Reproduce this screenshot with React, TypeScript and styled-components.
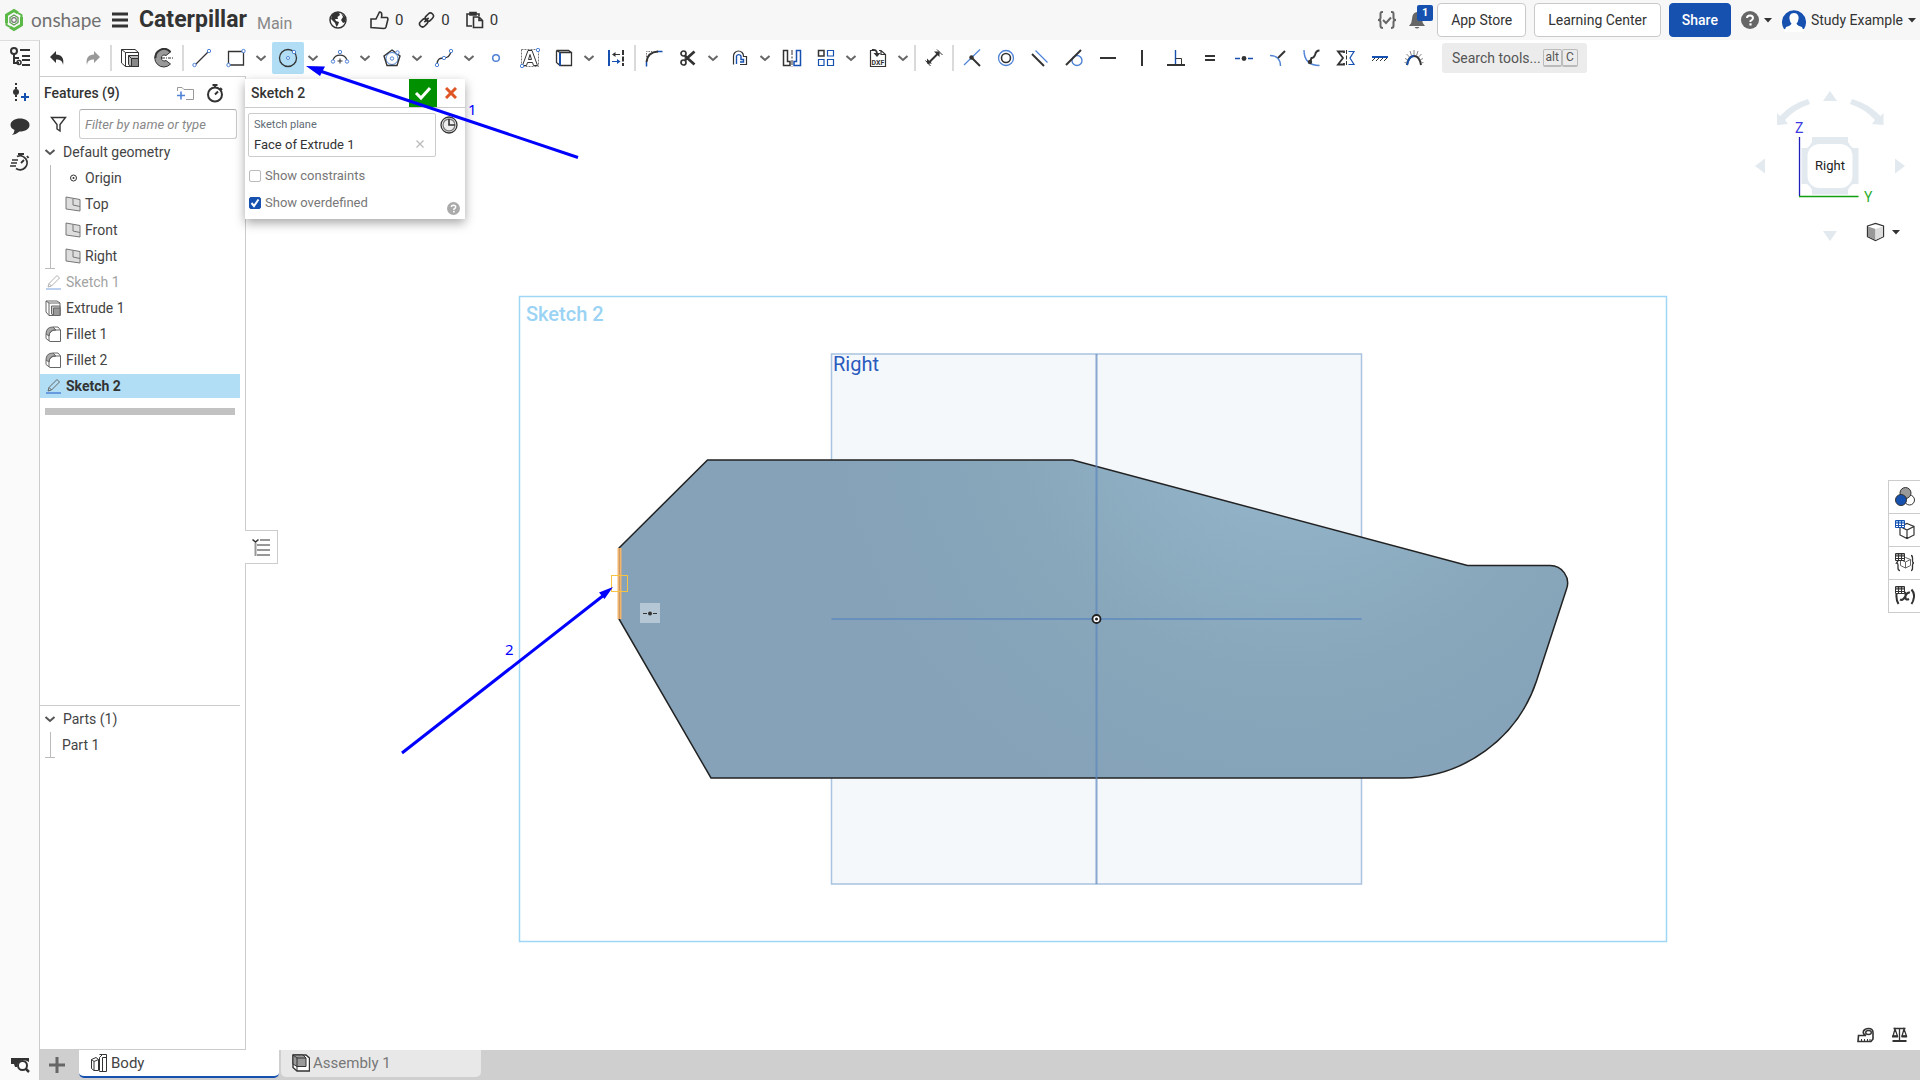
import React from "react";
import styled, { createGlobalStyle, css } from "styled-components";

const INK = "#333333";
const BLUE = "#1651b0";
const SOFT = "#4f83d6";

const GlobalStyle = createGlobalStyle`
  * { box-sizing: border-box; }
  body { margin: 0; background: #fff; overflow: hidden; }
  body, button, input { font-family: Roboto, "Liberation Sans", sans-serif; font-size: 14px; color: #333; }
  button { border: 0; background: none; padding: 0; margin: 0; cursor: pointer; }
  svg { display: block; flex: none; }
`;

const Page = styled.div`
  position: relative;
  display: grid;
  grid-template-rows: 40px minmax(0, 1fr);
  height: 100vh;
`;

/* ---------- top bar ---------- */
const TopBar = styled.header`
  display: flex;
  align-items: center;
  background: #f7f7f7;
  padding: 0 4px;
`;
const Brand = styled.a`
  display: flex;
  align-items: center;
  gap: 7px;
  width: 108px;
  color: #707070;
  font-family: Lato, sans-serif;
  font-size: 19px;
  line-height: 36px;
  text-decoration: none;
`;
const DocTitle = styled.h1`
  margin: 0 0 0 11px;
  font-size: 23px;
  font-weight: 700;
  line-height: 40px;
`;
const Branch = styled.span`
  margin: 6px 0 0 10px;
  width: 72px;
  color: #888;
  font-size: 16px;
`;
const Stat = styled.button<{ $wide?: boolean }>`
  display: flex;
  align-items: center;
  gap: 6px;
  margin-right: ${(p) => (p.$wide ? 23 : 15)}px;
  font-size: 15px;
`;
const Spacer = styled.div`
  flex: 1;
`;
const TopIcon = styled.button`
  position: relative;
  margin-right: 12px;
`;
const Badge = styled.span`
  position: absolute;
  left: 8px;
  top: -5px;
  width: 16px;
  height: 16px;
  border-radius: 2px;
  background: ${BLUE};
  color: #fff;
  font-size: 11px;
  font-weight: 700;
  line-height: 16px;
`;
const TopButton = styled.button<{ $primary?: boolean }>`
  height: 34px;
  padding: 0 13px;
  margin-right: 8px;
  border: 1px solid #c9c9c9;
  border-radius: 4px;
  background: #fff;
  ${(p) =>
    p.$primary &&
    css`
      padding: 0 12px;
      background: ${BLUE};
      border-color: ${BLUE};
      color: #fff;
      font-weight: 500;
    `}
`;
const MenuButton = styled.button`
  display: flex;
  align-items: center;
  gap: 5px;
  margin-left: 2px;
  margin-right: 8px;
  &:last-child {
    margin: 0 0 0 2px;
  }
`;

/* ---------- body ---------- */
const Body = styled.div`
  display: grid;
  grid-template-columns: 40px minmax(0, 1fr);
  min-height: 0;
`;
const Rail = styled.nav`
  display: flex;
  flex-direction: column;
  align-items: center;
  gap: 15px;
  padding: 6px 0 5px;
  background: #fafafa;
  border-right: 1px solid #ccc;
  border-top: 1px solid #ddd;
`;
const Column = styled.div`
  display: flex;
  flex-direction: column;
  min-height: 0;
`;
const Toolbar = styled.div`
  display: flex;
  align-items: center;
  gap: 2px;
  height: 36px;
  padding-left: 2px;
`;
const ToolGroup = styled.div`
  display: flex;
`;
const Tool = styled.button<{ $active?: boolean }>`
  display: flex;
  align-items: center;
  justify-content: center;
  width: 32px;
  height: 32px;
  border-radius: 2px;
  background: ${(p) => (p.$active ? "#b1def5" : "transparent")};
`;
const ToolMenu = styled.button`
  display: flex;
  align-items: center;
  justify-content: center;
  width: 18px;
`;
const Divider = styled.span`
  width: 2px;
  height: 26px;
  background: #dadada;
`;
const SearchTools = styled.button`
  display: flex;
  align-items: center;
  margin-left: 10px;
  height: 30px;
  padding: 0 9px 0 10px;
  border-radius: 3px;
  background: #ececec;
  color: #555;
`;
const Key = styled.kbd`
  height: 18px;
  padding: 0 2px;
  border: 1px solid #bbb;
  border-bottom-width: 2px;
  border-radius: 2px;
  font: 12px/15px Roboto, sans-serif;
  &:first-of-type {
    margin-left: 2px;
  }
  &:last-of-type {
    padding: 0 3px;
  }
`;

const Workspace = styled.div`
  display: flex;
  flex: 1;
  min-height: 0;
`;
const Panel = styled.aside`
  display: flex;
  flex-direction: column;
  width: 206px;
  border: 1px solid #ccc;
  border-left: 0;
`;
const PanelHead = styled.div`
  display: flex;
  align-items: center;
  height: 32px;
  padding: 0 21px 0 4px;
`;
const PanelTitle = styled.h2`
  flex: 1;
  margin: 0;
  font-size: 14px;
  font-weight: 500;
`;
const HeadButton = styled.button`
  margin-left: 12px;
`;
const FilterRow = styled.div`
  display: flex;
  align-items: center;
  gap: 12px;
  padding: 0 8px 0 10px;
`;
const FilterInput = styled.input`
  flex: 1;
  min-width: 0;
  height: 30px;
  padding: 0 5px;
  border: 1px solid #ccc;
  border-top-color: #aaa;
  border-radius: 3px;
  outline: 0;
  font-size: 13px;
  font-style: italic;
  &::placeholder {
    color: #888;
  }
`;
const Tree = styled.ul`
  display: flex;
  flex-direction: column;
  list-style: none;
  margin: 0;
  padding: 0;
`;
const Branches = styled(Tree)`
  position: relative;
  &::before {
    content: "";
    position: absolute;
    left: 10px;
    top: 0;
    bottom: 0;
    border-left: 1px solid #bbb;
  }
  &::after {
    content: "";
    position: absolute;
    left: 5px;
    bottom: 0;
    width: 10px;
    border-bottom: 1px solid #bbb;
  }
`;
const Row = styled.li<{ $indent: number; $gap?: number; $muted?: boolean; $active?: boolean }>`
  display: flex;
  align-items: center;
  gap: ${(p) => p.$gap ?? 5}px;
  height: 24px;
  margin: 1px 5px 1px 0;
  padding-left: ${(p) => p.$indent}px;
  color: ${(p) => (p.$muted ? "#a3a3a3" : "#444")};
  ${(p) =>
    p.$muted &&
    css`
      svg {
        opacity: 0.5;
      }
    `}
  ${(p) =>
    p.$active &&
    css`
      background: #b1def5;
      color: #333;
      font-weight: 700;
    `}
`;
const RollbackBar = styled.div`
  height: 7px;
  margin: 9px 10px 0 5px;
  background: #c2c2c2;
`;
const Parts = styled.section`
  height: 344px;
  margin-right: 5px;
  border-top: 1px solid #ccc;
`;

/* ---------- canvas ---------- */
const Canvas = styled.main`
  position: relative;
  flex: 1;
  min-width: 0;
`;
const Scene = styled.svg`
  width: 100%;
  height: 100%;
`;
const PanelToggle = styled.button`
  position: absolute;
  left: -1px;
  top: 454px;
  display: flex;
  align-items: center;
  justify-content: center;
  width: 33px;
  height: 34px;
  border: 1px solid #ccc;
  border-left: 0;
  background: #fff;
`;
const Dialog = styled.form`
  position: absolute;
  left: -1px;
  top: 3px;
  width: 220px;
  height: 140px;
  background: #fff;
  box-shadow: 0 4px 10px rgba(0, 0, 0, 0.35);
`;
const DialogHead = styled.div`
  display: flex;
  height: 29px;
  border-bottom: 1px solid #ccc;
`;
const DialogTitle = styled.h2`
  flex: 1;
  margin: 0;
  padding-left: 6px;
  font-size: 14px;
  font-weight: 500;
  line-height: 28px;
`;
const DialogButton = styled.button<{ $accept?: boolean }>`
  display: flex;
  align-items: center;
  justify-content: center;
  width: 28px;
  height: 28px;
  background: ${(p) => (p.$accept ? "#009000" : "transparent")};
`;
const DialogRow = styled.div`
  display: flex;
  align-items: flex-start;
  gap: 4px;
  padding: 5px 3px;
`;
const PlaneField = styled.div`
  display: flex;
  justify-content: space-between;
  width: 188px;
  height: 44px;
  padding: 4px 11px 0 5px;
  border: 1px solid #ccc;
  border-radius: 2px;
`;
const PlaneLabel = styled.label`
  display: block;
  color: #5f6b75;
  font-size: 11px;
  line-height: 14px;
`;
const PlaneValue = styled.input`
  width: 140px;
  height: 24px;
  padding: 0;
  border: 0;
  outline: 0;
  font-size: 13px;
`;
const ClearButton = styled.button`
  align-self: end;
  margin-bottom: 8px;
`;
const Check = styled.label`
  display: flex;
  align-items: center;
  gap: 4px;
  height: 27px;
  padding-left: 4px;
  color: #777;
  font-size: 13px;
`;
const Box = styled.input`
  appearance: none;
  width: 12px;
  height: 12px;
  margin: 0;
  border: 1px solid #bbb;
  border-radius: 2px;
  &:checked {
    border-color: ${BLUE};
    background: ${BLUE};
  }
`;
const BoxWrap = styled.span`
  position: relative;
  display: flex;
  svg {
    position: absolute;
    inset: 0;
    pointer-events: none;
  }
`;
const HelpDot = styled.button`
  position: absolute;
  right: 5px;
  bottom: 4px;
`;
const ViewMode = styled.button`
  position: absolute;
  right: 20px;
  top: 146px;
  display: flex;
  align-items: center;
  gap: 7px;
`;
const SideTabs = styled.nav`
  position: absolute;
  right: 0;
  top: 404px;
  width: 32px;
  border: 1px solid #ccc;
  border-right: 0;
  background: #fff;
`;
const SideTab = styled.button`
  display: flex;
  align-items: center;
  justify-content: center;
  width: 31px;
  height: 32px;
  & + & {
    height: 33px;
    border-top: 1px solid #ccc;
  }
`;
const Measures = styled.div`
  position: absolute;
  right: 11px;
  bottom: 5px;
  display: flex;
  gap: 16px;
`;

/* ---------- bottom tabs ---------- */
const TabBar = styled.nav`
  display: flex;
  height: 30px;
  background: #cfcfcf;
`;
const AddTab = styled.button`
  display: flex;
  align-items: center;
  justify-content: center;
  width: 34px;
  margin-right: 5px;
`;
const Tab = styled.button<{ $active?: boolean }>`
  display: flex;
  align-items: center;
  gap: 3px;
  width: 200px;
  height: ${(p) => (p.$active ? 28 : 27)}px;
  margin-right: 2px;
  padding-left: 11px;
  border-radius: 0 0 5px 5px;
  border-bottom: 2px solid ${(p) => (p.$active ? BLUE : "#e8e8e8")};
  background: ${(p) => (p.$active ? "#fff" : "#e8e8e8")};
  color: ${(p) => (p.$active ? "#444" : "#777")};
  font-size: 15px;
`;

const Overlay = styled.svg`
  position: absolute;
  inset: 0;
  width: 100%;
  height: 100%;
  pointer-events: none;
`;

/* ---------- icons ---------- */
type IconProps = { children: React.ReactNode; size?: number; w?: number; h?: number; color?: string; sw?: number };
const Icon = ({ children, size = 20, w = size, h = size, color = INK, sw = 1 }: IconProps) => (
  <svg width={w} height={h} viewBox={`0 0 ${w} ${h}`} fill="none" stroke={color} strokeWidth={sw}>
    {children}
  </svg>
);
const Chevron = ({ color = "#666" }) => (
  <Icon w={12} h={8} color={color} sw={2}>
    <path d="M1.5 2 L6 6 L10.5 2" />
  </Icon>
);
const Caret = () => (
  <Icon w={8} h={5}>
    <path d="M0 0 H8 L4 4.5Z" fill={INK} stroke="none" />
  </Icon>
);
const Dot = ({ x, y, r = 1.7 }: { x: number; y: number; r?: number }) => (
  <circle cx={x} cy={y} r={r} fill="#fff" stroke={SOFT} />
);

const undo = <path d="M2 9 L8 3 V6.5 C13.5 6.5 16.5 10.5 15 17 C14.5 13 12.5 11.5 8 11.5 V15Z" fill={INK} stroke="none" />;

const art: Record<string, React.ReactNode> = {
  undo,
  redo: (
    <g opacity={0.5} transform="matrix(-1 0 0 1 20 0)">
      {undo}
    </g>
  ),
  extrude: (
    <>
      <path d="M1.5 15 V1.5 H15 L18.5 4.5 V18.5 H5.5 Z M1.5 1.5 L5.5 4.5 H18.5 M5.5 4.5 V18.5" />
      <path d="M8.5 7.5 H18.5 V18.5 H11 L8.5 16.5Z" fill="#bbb" />
      <path d="M11.5 10.5 H18.5 V18.5 H11.5Z M8.5 7.5 L11.5 10.5" fill="#888" />
    </>
  ),
  imprint: (
    <>
      <path d="M16.5 4 A9 9 0 1 0 16.5 16 L12 12.5 A3 3 0 1 1 12 7.5Z" fill="#999" />
      <path d="M16.5 4 A8.5 8.5 0 0 0 1.5 10" strokeWidth={2} />
      <path d="M8 10 H19" stroke="#fff" strokeWidth={3} />
      <path d="M8 10 H19" strokeDasharray="3 1 1 1" />
    </>
  ),
  line: (
    <>
      <path d="M3.5 16.5 L16.5 3.5" strokeWidth={1.3} />
      <Dot x={2.5} y={17} />
      <Dot x={17} y={3} />
    </>
  ),
  rect: (
    <>
      <path d="M2.5 3.5 H17.5 V17 H2.5Z" strokeWidth={1.3} />
      <Dot x={2.5} y={17} />
      <Dot x={17.5} y={3} />
    </>
  ),
  circle: (
    <>
      <circle cx={10} cy={10} r={8.5} strokeWidth={1.3} />
      <Dot x={10} y={10} r={1.5} />
      <Dot x={16} y={4} />
    </>
  ),
  arc: (
    <>
      <path d="M3 12 A7.5 7.5 0 0 1 17 12" strokeWidth={1.3} />
      <path d="M10 10.5 V15.5 M7.5 13 H12.5" />
      <Dot x={3} y={13.5} />
      <Dot x={17} y={13.5} />
      <Dot x={10} y={4} />
    </>
  ),
  polygon: (
    <>
      <circle cx={10} cy={10.5} r={6} stroke={SOFT} />
      <path d="M10 2 L18 8 L15 17.5 H5 L2 8Z" strokeWidth={1.4} />
      <Dot x={10} y={10.5} />
      <Dot x={15.5} y={4.5} />
    </>
  ),
  spline: (
    <>
      <path d="M3 16 C4 8 8 11 10 10 C14 9 15 9 17 4" strokeWidth={1.3} />
      <Dot x={3} y={17} />
      <Dot x={10} y={10} />
      <Dot x={17} y={3} />
    </>
  ),
  point: <circle cx={10} cy={10} r={3.3} stroke={SOFT} strokeWidth={1.5} />,
  text: (
    <>
      <path d="M1.5 1.5 H18.5 V18.5 H1.5Z" strokeDasharray="2 1" stroke="#777" />
      <path d="M2.5 17.5 L8 2.5 H12 L17.5 17.5 H13.5 L12.5 14.5 H7.5 L6.5 17.5Z M8.5 11.5 H11.5 L10 6.5Z" fill="#fff" />
      <Dot x={2} y={18} />
      <Dot x={18} y={2} />
    </>
  ),
  project: (
    <>
      <path d="M6 4.5 H17.5 V17.5 H6Z M2.5 2.5 L6 4.5 M2.5 2.5 V14.5 L6 17.5 M2.5 2.5 H14.5 L17.5 4.5" strokeWidth={1.3} />
      <path d="M6 5 V17.5" stroke={BLUE} strokeWidth={2} />
    </>
  ),
  transfer: (
    <>
      <path d="M3 2 V18" stroke={BLUE} strokeWidth={2} />
      <path d="M17 2 V18" strokeWidth={2} strokeDasharray="5 1.5" />
      <path d="M14 6.5 H7" />
      <path d="M9.5 4 V9 L6 6.5Z" fill={INK} stroke="none" />
      <path d="M6 13.5 H13" stroke={BLUE} />
      <path d="M11 11 V16 L14.5 13.5Z" fill={BLUE} stroke="none" />
    </>
  ),
  fillet: (
    <>
      <path d="M2.5 18.5 V14 M13 3.5 H18.5" stroke={BLUE} strokeWidth={1.5} />
      <path d="M2.5 14 C3 8 7 4 14 3.5" strokeWidth={2} />
      <path d="M2.5 9 V3.5 H8" strokeDasharray="1.5 1" stroke="#777" />
    </>
  ),
  trim: (
    <>
      <circle cx={5.5} cy={5.5} r={2.5} strokeWidth={1.7} />
      <circle cx={5.5} cy={14.5} r={2.5} strokeWidth={1.7} />
      <path d="M7 8 L16.5 16.5 M7 12 L16.5 3.5" strokeWidth={2.8} />
    </>
  ),
  offset: (
    <>
      <path d="M3.5 16.5 V8 A5 5 0 0 1 13.5 8 V8.5 H16.5 V16.5 H10" strokeWidth={1.2} />
      <path d="M6.5 16 V8 A2.5 2.5 0 0 1 11 8 V11.5 H13.5 V14 H10" stroke={BLUE} strokeWidth={1.4} />
    </>
  ),
  mirror: (
    <>
      <path d="M1.5 2.5 H5.5 V13.5 H8 V17.5 H1.5Z" strokeWidth={1.5} />
      <path d="M18.5 2.5 H14.5 V13.5 H12 V17.5 H18.5Z" stroke={BLUE} strokeWidth={1.5} />
      <path d="M10 2 V19" strokeDasharray="5 1.5 2 1.5" />
    </>
  ),
  pattern: (
    <>
      <path d="M2.5 2.5 H8 V8 H2.5Z" strokeWidth={1.5} />
      <path d="M11.5 2.5 H17.5 V8 H11.5Z M2.5 11.5 H8 V17.5 H2.5Z M11.5 11.5 H17.5 V17.5 H11.5Z" stroke={BLUE} strokeWidth={1.2} />
    </>
  ),
  dxf: (
    <>
      <path d="M6 2.5 H2.5 V18.5 H17.5 V6.5 L13 2.5 H11 M13 2.5 V6.5 H17.5" strokeWidth={1.2} />
      <path d="M4 2 Q9 1 9 6" strokeWidth={1.8} />
      <path d="M5.5 5 H12.5 L9 9Z" fill={INK} stroke="none" />
      <text x={10} y={16.5} textAnchor="middle" fontSize={7} fontWeight={700} fill={INK} stroke="none">
        DXF
      </text>
    </>
  ),
  dimension: (
    <>
      <path d="M4 15.5 L15 4.5" strokeWidth={2} />
      <path d="M3 15.5 V10.5 L8 15.5Z M10 3.5 H15.5 V9Z" fill={INK} stroke="none" />
      <path d="M13 1.5 L18.5 7 M1.5 12.5 L6.5 18" />
    </>
  ),
  coincident: (
    <>
      <path d="M2 17 L18 1.5" stroke={SOFT} strokeWidth={1.2} />
      <path d="M9.5 9.5 L18 18" strokeWidth={2} />
      <circle cx={9.5} cy={9.5} r={2.2} fill={INK} stroke="none" />
    </>
  ),
  concentric: (
    <>
      <circle cx={10} cy={10} r={7.5} stroke={SOFT} strokeWidth={1.3} />
      <circle cx={10} cy={10} r={4.5} strokeWidth={1.6} />
    </>
  ),
  parallel: (
    <>
      <path d="M2 6 L14 18" strokeWidth={2} />
      <path d="M5.5 2.5 L17.5 14.5" stroke={SOFT} strokeWidth={1.2} />
    </>
  ),
  tangent: (
    <>
      <circle cx={13} cy={12.5} r={5} stroke={SOFT} strokeWidth={1.4} />
      <path d="M2 17 L17 2" strokeWidth={2} />
    </>
  ),
  horizontal: <path d="M2 10 H18" strokeWidth={2} />,
  vertical: <path d="M10 2 V18" strokeWidth={2} />,
  perpendicular: (
    <>
      <path d="M1 17 H19" strokeWidth={2} />
      <path d="M9.5 2 V16" stroke={BLUE} strokeWidth={1.4} />
      <path d="M9.5 10.5 H15.5 V16" />
    </>
  ),
  equal: <path d="M5 8 H15 M5 12 H15" strokeWidth={2} />,
  midpoint: (
    <>
      <path d="M1 10.5 H6 M14 10.5 H19" stroke={BLUE} strokeWidth={1.4} />
      <circle cx={10} cy={10.5} r={2.4} fill={INK} stroke="none" />
    </>
  ),
  normal: (
    <>
      <path d="M2 7.5 C8 7.5 12.5 11 12.5 18" stroke={SOFT} strokeWidth={1.4} />
      <path d="M10 10 L17 3" strokeWidth={2} />
    </>
  ),
  pierce: (
    <>
      <path d="M2 2 C2 12 7 17.5 17.5 17.5" stroke={SOFT} strokeWidth={1.4} />
      <path d="M8 14 L9.5 10 Q12 10 13 7 Q14 2.5 17.5 2.5" strokeWidth={2} />
      <circle cx={8} cy={14} r={2.2} fill={INK} stroke="none" />
    </>
  ),
  symmetric: (
    <>
      <path d="M8 5 V3.5 H2 L7 10 L2 16.5 H8 V15" strokeWidth={1.8} />
      <path d="M12.5 3.5 H18 L14 10 L18 16.5 H12.5" stroke={BLUE} strokeWidth={1.2} />
      <path d="M10.5 2 V18" strokeDasharray="4 1.5" />
    </>
  ),
  fix: (
    <>
      <path d="M2 9 H18" stroke={BLUE} strokeWidth={2} />
      <path d="M2 13 L5 10 M6 13 L9 10 M10 13 L13 10 M14 13 L17 10" />
    </>
  ),
  curvature: (
    <>
      <path d="M3 17 C5 5 15 5 17 17" strokeWidth={2} />
      <path d="M3 17 C4.5 10 7 8 10 8" stroke={BLUE} strokeWidth={2} />
      <path d="M10 7 V2 M7.5 7.5 L6 3 M12.5 7.5 L14 3 M5.5 9 L2.5 6 M14.5 9 L17.5 6 M4 12 L1 10.5 M16 12 L19 10.5 M3 15 L0.5 14.5 M17 15 L19.5 14.5" stroke="#888" />
    </>
  ),
};

type ToolDef = [name: string, label: string, menu?: boolean] | null;
const tools: ToolDef[] = [
  ["undo", "Undo"],
  ["redo", "Redo"],
  null,
  ["extrude", "Extrude"],
  ["imprint", "Revolve"],
  null,
  ["line", "Line"],
  ["rect", "Rectangle", true],
  ["circle", "Circle", true],
  ["arc", "Arc", true],
  ["polygon", "Polygon", true],
  ["spline", "Spline", true],
  ["point", "Point"],
  ["text", "Text"],
  ["project", "Use", true],
  ["transfer", "Construction"],
  null,
  ["fillet", "Sketch fillet"],
  ["trim", "Trim", true],
  ["offset", "Offset", true],
  ["mirror", "Mirror"],
  ["pattern", "Pattern", true],
  ["dxf", "Insert DXF", true],
  null,
  ["dimension", "Dimension"],
  null,
  ["coincident", "Coincident"],
  ["concentric", "Concentric"],
  ["parallel", "Parallel"],
  ["tangent", "Tangent"],
  ["horizontal", "Horizontal"],
  ["vertical", "Vertical"],
  ["perpendicular", "Perpendicular"],
  ["equal", "Equal"],
  ["midpoint", "Midpoint"],
  ["normal", "Normal"],
  ["pierce", "Pierce"],
  ["symmetric", "Symmetric"],
  ["fix", "Fix"],
  ["curvature", "Curvature"],
];

const rowIcon: Record<string, React.ReactNode> = {
  origin: (
    <Icon w={16} h={16}>
      <circle cx={8.5} cy={8} r={3} />
      <circle cx={8.5} cy={8} r={1} fill={INK} stroke="none" />
    </Icon>
  ),
  plane: (
    <Icon w={16} h={16} color="#777">
      <path d="M1 1 L15 3.5 V15 L1 13Z" fill="#ddd" />
      <path d="M8 2.5 V9 L15 10.5" />
    </Icon>
  ),
  sketch: (
    <Icon w={16} h={16} color="#666">
      <path d="M3 13 L4 9.5 L12 1.5 L14.5 4 L6.5 12Z M4 9.5 L6.5 12" />
      <path d="M1 15 H16" stroke={SOFT} strokeWidth={1.5} />
    </Icon>
  ),
  extrude: (
    <Icon w={16} h={16} color="#666">
      <path d="M1 12 V1 H12 L15 3 V15.5 H4 Z M1 1 L4 3 H15 M4 3 V15.5" />
      <path d="M6.500 6 H15 V15.500 H9 L6.500 14Z" fill="#ccc" />
      <path d="M8.500 8 H15 V15.500 H8.500Z" fill="#999" />
    </Icon>
  ),
  fillet: (
    <Icon w={16} h={16} color="#666">
      <path d="M1 8 Q1 1 8 1 L11 4 Q4.5 4 4 10Z" fill="#aaa" />
      <path d="M8 1 H13 L15.5 4 V15.5 H5 L1 12.5 V8 M4 15 V10 Q4.5 4 10 4 H15.5" />
    </Icon>
  ),
};

const geometry: [string, string][] = [
  ["origin", "Origin"],
  ["plane", "Top"],
  ["plane", "Front"],
  ["plane", "Right"],
];
const features = [
  { icon: "sketch", name: "Sketch 1", muted: true },
  { icon: "extrude", name: "Extrude 1" },
  { icon: "fillet", name: "Fillet 1" },
  { icon: "fillet", name: "Fillet 2" },
  { icon: "sketch", name: "Sketch 2", active: true },
];

const Stopwatch = () => (
  <Icon w={18} h={20} sw={2}>
    <circle cx={9} cy={11.5} r={7} />
    <path d="M6.5 2 H11.5 M9 2 V5 M14 5 L16 7 M9 11.5 L12 8.5" />
  </Icon>
);
const QuestionDot = ({ size, color }: { size: number; color: string }) => (
  <svg width={size} height={size} viewBox="0 0 18 18">
    <circle cx={9} cy={9} r={9} fill={color} />
    <path d="M6 7 Q6 4.5 9 4.5 Q12 4.5 12 7 Q12 8.5 9.5 10 V11" fill="none" stroke="#fff" strokeWidth={2} />
    <rect x={8.4} y={12.3} width={2.2} height={2.2} fill="#fff" />
  </svg>
);
const Grid = ({ color, head }: { color: string; head: string }) => (
  <>
    <path d="M0.5 0.5 H9.5 V7.5 H0.5Z" fill="#fff" stroke={color} />
    <path d="M1 1 H9 V3 H1Z" fill={head} stroke="none" />
    <path d="M0.5 3 H9.5 M0.5 5.5 H9.5 M3.5 0.5 V7.5 M6.5 0.5 V7.5" stroke={color} />
  </>
);

const ModelScene = () => (
  <Scene viewBox="246 76 1674 974" fontFamily="Roboto, sans-serif">
    <defs>
      <radialGradient id="shade" gradientUnits="userSpaceOnUse" cx={1290} cy={390} r={470}>
        <stop offset="0" stopColor="#9abbcf" />
        <stop offset="0.3" stopColor="#90b0c5" />
        <stop offset="0.6" stopColor="#88a7bb" />
        <stop offset="1" stopColor="#85a2b8" />
      </radialGradient>
    </defs>
    <rect x={519.5} y={296.5} width={1147} height={645} fill="none" stroke="#9fd5f5" strokeWidth={1.5} />
    <text x={526} y={321} fontSize={20} fontWeight={500} fill="#9bd3f4">
      Sketch 2
    </text>
    <rect x={831.5} y={354} width={530} height={530} fill="#f4f8fb" stroke="#a9c3e0" strokeWidth={1.5} />
    <path
      d="M619 548 L707.5 460 H1072.5 L1467.5 565.5 H1550 A17.5 17.5 0 0 1 1566.6 588.800 L1536.5 681 A142 142 0 0 1 1403 778 H711 L619 619Z"
      fill="url(#shade)"
      stroke="#222"
      strokeWidth={1.5}
    />
    <path d="M1096.5 354 V884 M831.5 619 H1361.5" stroke="#5d88bd" strokeOpacity={0.7} strokeWidth={2} />
    <text x={833} y={371} fontSize={20} fill="#2a5bbd">
      Right
    </text>
    <path d="M619.5 548 V619" stroke="#f2b56b" strokeWidth={4} />
    <path d="M619.5 548 V619" stroke="#c99b6a" strokeWidth={1} />
    <rect x={611.5} y={575.5} width={16} height={16} fill="none" stroke="#f5c242" />
    <rect x={640} y={603} width={20} height={20} fill="#b5c7d4" />
    <path d="M643 613.5 H647 M653 613.5 H657" stroke={INK} />
    <circle cx={650} cy={613.5} r={2} fill={INK} />
    <circle cx={1096.5} cy={619} r={4} fill="#fff" stroke="#222" strokeWidth={1.8} />
    <circle cx={1096.5} cy={619} r={1.5} fill="#222" />
    {/* view cube */}
    <g fill="#e2e9ef">
      <path d="M1830 91 L1837 101 H1823Z M1830 241 L1837 231 H1823Z M1755 166 L1765 158.5 V173.5Z M1905 166 L1895 158.5 V173.5Z" />
      <path d="M1812 137 H1848 V142 Q1850 146 1853 148 H1858.5 V184 H1853 Q1850 186 1848 190 V194.5 H1812 V190 Q1810 186 1807 184 H1801.5 V148 H1807 Q1810 146 1812 142Z" />
      <path d="M1777 113 L1780 116 Q1791 104 1808 99 L1810 104 Q1795 109 1785 120 L1788 124 L1777 125Z" />
      <path d="M1883.5 113 L1880.5 116 Q1869 104 1852 99 L1850 104 Q1865 109 1875 120 L1872 124 L1883.5 125Z" />
    </g>
    <rect x={1807.5} y={144} width={45} height={44} rx={12} fill="#fff" />
    <text x={1830} y={170} fontSize={13} textAnchor="middle" fill="#222">
      Right
    </text>
    <path d="M1799.5 137 V196" stroke="#2020b8" strokeWidth={1.3} />
    <path d="M1799 196.5 H1858.5" stroke="#10a010" strokeWidth={1.3} />
    <text x={1795} y={133} fontSize={14} fill="#3a3ae0">
      Z
    </text>
    <text x={1864} y={202} fontSize={14} fill="#2cae2c">
      Y
    </text>
  </Scene>
);

export default function App() {
  return (
    <Page>
      <GlobalStyle />
      <TopBar>
        <Brand href="#">
          <Icon w={20} h={24} color="#5bb947" sw={3}>
            <path d="M2.5 15 V7 L10 2.5 L14 5 M17.5 9 V17 L10 21.5 L6 19" />
            <path d="M14 5 L17.5 7 V9 M2.5 15 V17 L6 19" strokeWidth={2} />
            <path d="M6 14.5 V9.5 L10 7 L14 9.5 V14.5 L10 17Z" stroke="#5aa04e" strokeWidth={1.3} />
            <circle cx={10} cy={12} r={2.3} stroke="#777" strokeWidth={1.2} />
          </Icon>
          onshape
        </Brand>
        <button aria-label="Menu">
          <Icon w={16} h={16} sw={3}>
            <path d="M0 2 H16 M0 8 H16 M0 14 H16" />
          </Icon>
        </button>
        <DocTitle>Caterpillar</DocTitle>
        <Branch>Main</Branch>
        <Stat $wide aria-label="Public">
          <Icon w={18} h={18}>
            <circle cx={9} cy={9} r={8} fill="#fff" strokeWidth={1.5} />
            <path d="M3 4 Q6 0.5 10 1.5 L11 4 L8.5 6 L9 8 L6 8 L7 10 L10 11 L9 14 L7.5 16 L6 12 L2 8Z M12 2 L16 6 L16.5 11 L14 12 L12 9 L14 6Z" fill={INK} stroke="none" />
          </Icon>
        </Stat>
        <Stat>
          <Icon w={19} h={20} sw={1.6}>
            <path d="M1 9 H6 L9.5 2 Q12.5 1.5 11.5 7.5 H17 Q18.5 8 17.5 11 L16 17 Q15.5 18.5 14 18.5 L1 17.5Z" />
          </Icon>
          0
        </Stat>
        <Stat>
          <Icon w={17} h={18} sw={1.6}>
            <g transform="rotate(-45 8.5 9)">
              <rect x={0} y={6} width={9} height={6} rx={3} />
              <rect x={8} y={6} width={9} height={6} rx={3} />
              <path d="M5.5 9 H11.5" />
            </g>
          </Icon>
          0
        </Stat>
        <Stat>
          <Icon w={19} h={18} sw={1.6}>
            <path d="M7 15 H2 V3 H14 V5 M5 1.5 H11 V4 H5Z M8.5 6 H14 L17.5 9.5 V16.5 H8.5Z M14 6 V9.5 H17.5" />
          </Icon>
          0
        </Stat>
        <Spacer />
        <TopIcon aria-label="Variables">
          <Icon w={20} h={20} color="#666" sw={2}>
            <path d="M6 2 H5 Q3.5 2 3.5 4 V8 Q3.5 10 1 10 Q3.5 10 3.5 12 V16 Q3.5 18 6 18 M14 2 H15 Q16.5 2 16.5 4 V8 Q16.5 10 19 10 Q16.5 10 16.5 12 V16 Q16.5 18 14 18 M6 10 L9 13 L14 7.5" />
          </Icon>
        </TopIcon>
        <TopIcon aria-label="Notifications">
          <Icon w={16} h={20} color="#666">
            <path d="M8 2 Q13 3 13 9 Q13 13 16 16 H0 Q3 13 3 9 Q3 3 8 2Z M5.5 17 H10.5 Q8 20 5.5 17Z" fill="#666" stroke="none" />
          </Icon>
          <Badge>1</Badge>
        </TopIcon>
        <TopButton>App Store</TopButton>
        <TopButton>Learning Center</TopButton>
        <TopButton $primary>Share</TopButton>
        <MenuButton aria-label="Help">
          <QuestionDot size={18} color="#666" />
          <Caret />
        </MenuButton>
        <MenuButton>
          <svg width={24} height={24} viewBox="0 0 24 24">
            <path d="M2 21 A12 12 0 1 1 22 21Z" fill={BLUE} />
            <path d="M12 5 C15.5 5 17 8 16.5 11 Q16 14.5 14.5 15.5 Q15 17.5 20 19 L22 24 H2 L4 19 Q9 17.5 9.5 15.5 Q8 14.5 7.5 11 C7 8 8.5 5 12 5Z" fill="#fff" />
          </svg>
          Study Example
          <Caret />
        </MenuButton>
      </TopBar>

      <Body>
        <Rail>
          <button aria-label="Feature list">
            <Icon w={20} h={20} sw={2}>
              <circle cx={4} cy={4} r={3} />
              <path d="M4 7 V16 H9 M4 11 H9 M10 3 H20 M12 9 H20 M12 13 H20 M12 18 H20" />
              <circle cx={9} cy={15.5} r={2} strokeWidth={1.5} />
            </Icon>
          </button>
          <button aria-label="Add version">
            <Icon w={20} h={20} sw={2}>
              <path d="M6 1 V20" strokeDasharray="2 2" />
              <circle cx={6} cy={10} r={3} fill={INK} stroke="none" />
              <path d="M11 15 H19 M15 11 V19" stroke={BLUE} />
            </Icon>
          </button>
          <button aria-label="Comments">
            <Icon w={20} h={20}>
              <path d="M10 1.5 C15 1.5 19.5 4 19.5 8 C19.5 12 15.5 14.5 9.5 14.5 Q6 17.5 2 18 Q4.5 15.5 4.5 13 C2 12 0.5 10 0.5 8 C0.5 4 5 1.5 10 1.5Z" fill={INK} stroke="none" />
            </Icon>
          </button>
          <button aria-label="History">
            <Icon w={20} h={20} sw={1.8}>
              <path d="M7 4.5 A7 7 0 1 1 6 16.5 M8 2 H14 M11 2 V4 M17 4 L18.5 6 M11 11 L14 8" />
              <path d="M2 8 H8 M1 11 H7 M0 14 H6" strokeWidth={1.3} />
            </Icon>
          </button>
          <Spacer />
          <button aria-label="Search tabs">
            <Icon w={20} h={20} sw={2}>
              <path d="M1 3 H19 V7 Q15 4 10 6 Q7 8 7 12 H5 L4 9 H1Z" fill={INK} stroke="none" />
              <circle cx={12.5} cy={10.5} r={4.5} fill="#fff" />
              <path d="M15.5 13.5 L19 17" strokeWidth={2.5} />
            </Icon>
          </button>
        </Rail>

        <Column>
          <Toolbar role="toolbar">
            {tools.map((t, i) =>
              t ? (
                <ToolGroup key={i}>
                  <Tool aria-label={t[1]} $active={t[0] === "circle"}>
                    <Icon>{art[t[0]]}</Icon>
                  </Tool>
                  {t[2] && (
                    <ToolMenu aria-label={`${t[1]} options`}>
                      <Chevron />
                    </ToolMenu>
                  )}
                </ToolGroup>
              ) : (
                <Divider key={i} />
              )
            )}
            <SearchTools>
              Search tools...<Key>alt</Key>
              <Key>C</Key>
            </SearchTools>
          </Toolbar>

          <Workspace>
            <Panel>
              <PanelHead>
                <PanelTitle>Features (9)</PanelTitle>
                <HeadButton aria-label="Add folder">
                  <Icon w={18} h={16} color="#999">
                    <path d="M1.5 6 V2.5 H6 L8 4.5 H17.5 V14.5 H10" />
                    <path d="M1 10.5 H9 M5 6.5 V14.5" stroke={SOFT} strokeWidth={1.6} />
                  </Icon>
                </HeadButton>
                <HeadButton aria-label="Regeneration times">
                  <Stopwatch />
                </HeadButton>
              </PanelHead>
              <FilterRow>
                <Icon w={17} h={18}>
                  <path d="M1.5 2.5 H15.5 L10 9.5 V16 L7 14 V9.5Z" strokeWidth={1.4} />
                </Icon>
                <FilterInput aria-label="Filter features" placeholder="Filter by name or type" />
              </FilterRow>
              <Tree>
                <Row $indent={4} $gap={7}>
                  <Chevron color="#555" />
                  Default geometry
                </Row>
                <li>
                  <Branches>
                    {geometry.map(([icon, name]) => (
                      <Row key={name} $indent={25} $gap={4}>
                        {rowIcon[icon]}
                        {name}
                      </Row>
                    ))}
                  </Branches>
                </li>
                {features.map((f) => (
                  <Row key={f.name} $indent={5} $muted={f.muted} $active={f.active}>
                    {rowIcon[f.icon]}
                    {f.name}
                  </Row>
                ))}
              </Tree>
              <RollbackBar />
              <Spacer />
              <Parts>
                <Tree>
                  <Row $indent={4} $gap={7}>
                    <Chevron color="#555" />
                    Parts (1)
                  </Row>
                  <li>
                    <Branches>
                      <Row $indent={22}>Part 1</Row>
                    </Branches>
                  </li>
                </Tree>
              </Parts>
            </Panel>

            <Canvas>
              <ModelScene />
              <PanelToggle aria-label="Toggle feature list">
                <Icon w={20} h={20}>
                  <path d="M1.5 2.5 L4.5 5 L7.5 2.5" strokeWidth={1.6} />
                  <path d="M4.5 6 V19" stroke="#999" strokeWidth={2} />
                  <path d="M9 3 H19 M6 8 H19 M6 13 H19 M6 18 H19" strokeWidth={1.2} />
                </Icon>
              </PanelToggle>

              <Dialog onSubmit={(e) => e.preventDefault()}>
                <DialogHead>
                  <DialogTitle>Sketch 2</DialogTitle>
                  <DialogButton $accept aria-label="Accept">
                    <Icon w={18} h={18} color="#fff" sw={3}>
                      <path d="M2 9 L7 14 L16 4" />
                    </Icon>
                  </DialogButton>
                  <DialogButton type="button" aria-label="Cancel">
                    <Icon w={12} h={12} color="#e05525" sw={3}>
                      <path d="M1 1 L11 11 M11 1 L1 11" />
                    </Icon>
                  </DialogButton>
                </DialogHead>
                <DialogRow>
                  <PlaneField>
                    <div>
                      <PlaneLabel htmlFor="plane">Sketch plane</PlaneLabel>
                      <PlaneValue id="plane" defaultValue="Face of Extrude 1" />
                    </div>
                    <ClearButton type="button" aria-label="Clear">
                      <Icon w={8} h={8} color="#bbb">
                        <path d="M0.5 0.5 L7.5 7.5 M7.5 0.5 L0.5 7.5" strokeWidth={1.3} />
                      </Icon>
                    </ClearButton>
                  </PlaneField>
                  <button type="button" aria-label="Final">
                    <Icon w={18} h={24} sw={1.3}>
                      <circle cx={9} cy={12} r={8} />
                      <circle cx={9} cy={12} r={6} stroke="#777" fill="#eee" />
                      <path d="M9 6 V12 H15" strokeWidth={1.6} />
                    </Icon>
                  </button>
                </DialogRow>
                <Check>
                  <Box type="checkbox" />
                  Show constraints
                </Check>
                <Check>
                  <BoxWrap>
                    <Box type="checkbox" defaultChecked />
                    <Icon w={12} h={12} color="#fff" sw={2}>
                      <path d="M2.5 6 L5 9 L9.5 2.5" />
                    </Icon>
                  </BoxWrap>
                  Show overdefined
                </Check>
                <HelpDot type="button" aria-label="Help">
                  <QuestionDot size={13} color="#aaa" />
                </HelpDot>
              </Dialog>

              <ViewMode aria-label="View options">
                <Icon w={19} h={20}>
                  <path d="M1.5 4 L9.5 1.5 L17.5 4 V14.5 L9.5 18.5 L1.5 14.5Z" fill="#fff" strokeWidth={1.3} />
                  <path d="M2 4.5 L9.5 7 V18 L2 14.5Z" fill="#999" stroke="none" />
                  <path d="M17 4.5 L9.5 7 V18 L17 14.5Z" fill="#ddd" stroke="none" />
                </Icon>
                <Caret />
              </ViewMode>

              <SideTabs>
                <SideTab aria-label="Appearances">
                  <Icon>
                    <circle cx={14.5} cy={13} r={5} fill="#fff" />
                    <circle cx={10.5} cy={6} r={5.5} fill="#999" />
                    <circle cx={6} cy={13} r={5.5} fill={BLUE} />
                  </Icon>
                </SideTab>
                <SideTab aria-label="Configurations">
                  <Icon>
                    <path d="M12 3.5 L19 6.5 V15 L12 18.5 L5 15 V6.5Z M5 6.5 L12 10 L19 6.5 M12 10 V18.5" strokeWidth={1.2} />
                    <Grid color={BLUE} head="#8fc4ee" />
                  </Icon>
                </SideTab>
                <SideTab aria-label="Configured properties">
                  <Icon>
                    <path d="M10.5 4.5 L15.5 6.5 V12.5 L10.5 15 L5.5 12.5 V6.5Z M5.5 6.5 L10.5 9 L15.5 6.5 M10.5 9 V15" stroke="#666" />
                    <path d="M16 2.5 Q17.5 2.5 17.5 5 V8 Q17.5 10 19 10 Q17.5 10 17.5 12 V15 Q17.5 17.5 16 17.5 M5 17.5 Q3 17.5 3 15 V12 Q3 10 1.5 10 L3 8" strokeWidth={1.3} />
                    <Grid color={INK} head="#999" />
                  </Icon>
                </SideTab>
                <SideTab aria-label="Variable table">
                  <Icon>
                    <path d="M16.5 3.5 Q19.5 7 19 11 Q18.5 15 16.5 18 M3.5 18 Q1 14 1.5 8" strokeWidth={2} />
                    <path d="M8 6.5 Q11 5.5 10.5 10 Q10 15 14 13 M15 6.5 Q12 6 10.5 10 Q8 15 5 13.5" strokeWidth={2} />
                    <Grid color={INK} head="#999" />
                  </Icon>
                </SideTab>
              </SideTabs>

              <Measures>
                <button aria-label="Measure">
                  <Icon w={18} h={18}>
                    <path d="M1.5 8.5 H9 Q5.5 7 6.5 4 Q8 1.5 11.5 1.5 Q16 1.5 16 5.5 V12 L14 14.5 H1Z" strokeWidth={1.6} />
                    <ellipse cx={11.5} cy={5.5} rx={2.8} ry={2} strokeWidth={1.4} />
                    <path d="M4.5 14 V12 M7.5 14 V12 M10.5 14 V12 M13 14 V12" />
                  </Icon>
                </button>
                <button aria-label="Mass properties">
                  <Icon w={18} h={18}>
                    <path d="M2.5 1.5 H14.5 M8.5 1 V13 M4 2 L2 9 H6.5Z M13 2 L11 9 H15.5Z" strokeWidth={1.3} />
                    <path d="M1 9.5 H7 M10.500 9.5 H16 M1.500 14 H15.500" strokeWidth={2} />
                  </Icon>
                </button>
              </Measures>
            </Canvas>
          </Workspace>

          <TabBar>
            <AddTab aria-label="Add tab">
              <Icon w={16} h={16} color="#666" sw={3}>
                <path d="M0 8 H16 M8 0 V16" />
              </Icon>
            </AddTab>
            <Tab $active>
              <Icon w={18} h={20}>
                <path d="M1.5 6.5 L6 4.5 L8.5 6.5 V17.5 H4 L1.5 15.5Z M4 8.5 V17.5 M1.5 6.5 L4 8.5 L8.5 6.5 M9.5 17.5 V4.5 L12.5 1.5 H16.5 V18.5 H9.5Z M9.5 1.5 H12.5 M12.5 4.5 H16.5 M12.5 4.5 V18.5" />
              </Icon>
              Body
            </Tab>
            <Tab>
              <Icon w={18} h={20}>
                <path d="M1 2 H14 L17.5 5 V18 H5 L1 14.5Z" fill="#fff" strokeWidth={1.4} />
                <path d="M1 2 H11 L14 5 V13.5 H5 L1 11Z" fill="#999" />
                <path d="M1 2 L5 5 H14 M5 5 V18" />
              </Icon>
              Assembly 1
            </Tab>
          </TabBar>
        </Column>
      </Body>

      <Overlay viewBox="0 0 1920 1080" fontFamily="Noto Sans, sans-serif" fontSize={15} fill="#0000ff">
        <path d="M578 157.5 L320 71 M402 753 L604 595" stroke="#0000ff" strokeWidth={3} />
        <path d="M306 66 L325 66.5 L320 76Z M613 587 L604.5 599 L599 592.5Z" />
        <text x={468} y={115}>
          1
        </text>
        <text x={505} y={655}>
          2
        </text>
      </Overlay>
    </Page>
  );
}
